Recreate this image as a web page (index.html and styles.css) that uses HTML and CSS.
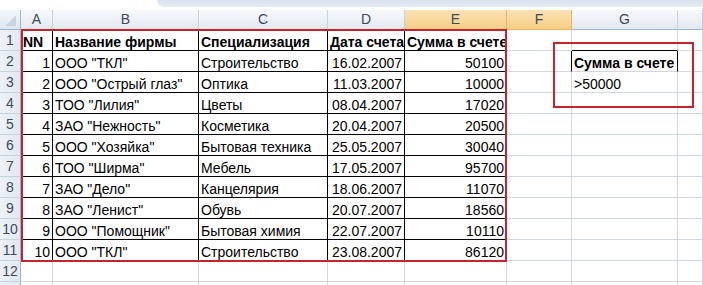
FILE: index.html
```html
<!DOCTYPE html>
<html lang="ru">
<head>
<meta charset="utf-8">
<link rel="stylesheet" href="styles.css">
</head>
<body>
<div class="sheet">
  <div class="topbar"><div class="fbar"></div></div>
  <div class="grid">
    <div class="corner"></div>
    <div class="ch">A</div><div class="ch">B</div><div class="ch">C</div><div class="ch">D</div>
    <div class="ch sel">E</div><div class="ch sel">F</div><div class="ch">G</div><div class="ch"></div>

    <div class="rh">1</div>
    <div class="c t b">NN</div><div class="c t b">Название фирмы</div><div class="c t b">Специализация</div><div class="c t b">Дата счета</div><div class="c t b">Сумма в счете</div>
    <div class="c fr"></div><div class="c gt"></div><div class="c"></div>

    <div class="rh">2</div>
    <div class="c t r">1</div><div class="c t">ООО "ТКЛ"</div><div class="c t">Строительство</div><div class="c t r">16.02.2007</div><div class="c t r">50100</div>
    <div class="c fk"></div><div class="c b gk">Сумма в счете</div><div class="c"></div>

    <div class="rh">3</div>
    <div class="c t r">2</div><div class="c t">ООО "Острый глаз"</div><div class="c t">Оптика</div><div class="c t r">11.03.2007</div><div class="c t r">10000</div>
    <div class="c"></div><div class="c">&gt;50000</div><div class="c"></div>

    <div class="rh">4</div>
    <div class="c t r">3</div><div class="c t">ТОО "Лилия"</div><div class="c t">Цветы</div><div class="c t r">08.04.2007</div><div class="c t r">17020</div>
    <div class="c"></div><div class="c"></div><div class="c"></div>

    <div class="rh">5</div>
    <div class="c t r">4</div><div class="c t">ЗАО "Нежность"</div><div class="c t">Косметика</div><div class="c t r">20.04.2007</div><div class="c t r">20500</div>
    <div class="c"></div><div class="c"></div><div class="c"></div>

    <div class="rh">6</div>
    <div class="c t r">5</div><div class="c t">ООО "Хозяйка"</div><div class="c t">Бытовая техника</div><div class="c t r">25.05.2007</div><div class="c t r">30040</div>
    <div class="c"></div><div class="c"></div><div class="c"></div>

    <div class="rh">7</div>
    <div class="c t r">6</div><div class="c t">ТОО "Ширма"</div><div class="c t">Мебель</div><div class="c t r">17.05.2007</div><div class="c t r">95700</div>
    <div class="c"></div><div class="c"></div><div class="c"></div>

    <div class="rh">8</div>
    <div class="c t r">7</div><div class="c t">ЗАО "Дело"</div><div class="c t">Канцелярия</div><div class="c t r">18.06.2007</div><div class="c t r">11070</div>
    <div class="c"></div><div class="c"></div><div class="c"></div>

    <div class="rh">9</div>
    <div class="c t r">8</div><div class="c t">ЗАО "Ленист"</div><div class="c t">Обувь</div><div class="c t r">20.07.2007</div><div class="c t r">18560</div>
    <div class="c"></div><div class="c"></div><div class="c"></div>

    <div class="rh">10</div>
    <div class="c t r">9</div><div class="c t">ООО "Помощник"</div><div class="c t">Бытовая химия</div><div class="c t r">22.07.2007</div><div class="c t r">10110</div>
    <div class="c"></div><div class="c"></div><div class="c"></div>

    <div class="rh">11</div>
    <div class="c t r">10</div><div class="c t">ООО "ТКЛ"</div><div class="c t">Строительство</div><div class="c t r">23.08.2007</div><div class="c t r">86120</div>
    <div class="c"></div><div class="c"></div><div class="c"></div>

    <div class="rh">12</div>
    <div class="c"></div><div class="c"></div><div class="c"></div><div class="c"></div><div class="c"></div>
    <div class="c"></div><div class="c"></div><div class="c"></div>

    <div class="rh"></div>
    <div class="c"></div><div class="c"></div><div class="c"></div><div class="c"></div><div class="c"></div>
    <div class="c"></div><div class="c"></div><div class="c"></div>
  </div>
  <div class="redbox main"></div>
  <div class="redbox crit"></div>
</div>
</body>
</html>
```

FILE: styles.css
```css
html, body {
  margin: 0;
  padding: 0;
  background: #ffffff;
  overflow: hidden;
}
.sheet {
  position: relative;
  width: 703px;
  height: 285px;
  overflow: hidden;
  font-family: "Liberation Sans", Arial, sans-serif;
  font-size: 14px;
  color: #000;
}
.topbar {
  height: 10px;
  background: #ffffff;
  display: flex;
  justify-content: flex-end;
}
.fbar {
  width: 546px;
  height: 7px;
  background: linear-gradient(#d9e2ee, #e6ecf4);
  border-bottom-left-radius: 7px;
}
.grid {
  display: grid;
  grid-template-columns: 21px 32px 146px 129px 77px 102px 65px 106px 25px;
  grid-template-rows: 20px repeat(13, 21px);
}
.corner {
  box-sizing: border-box;
  border-right: 1px solid #9eb6ce;
  border-bottom: 1px solid #9eb6ce;
  background:
    linear-gradient(135deg, transparent 0 58%, #c9d3df 58% 100%) no-repeat 4px 4px / 12px 12px,
    linear-gradient(#f4f7fb, #dde5ef);
}
.ch {
  box-sizing: border-box;
  border-right: 1px solid #c5d2df;
  border-bottom: 1px solid #9eb6ce;
  background: linear-gradient(#f7f9fc, #e3e9f1);
  color: #3c4a5c;
  font-size: 14px;
  line-height: 19px;
  text-align: center;
}
.ch.sel {
  background: linear-gradient(#fbe3b4, #f6ce86);
  border-right-color: #e3b66a;
  border-bottom-color: #f1b55a;
}
.rh {
  box-sizing: border-box;
  border-right: 1px solid #9eb6ce;
  border-bottom: 1px solid #c5d2df;
  background: linear-gradient(90deg, #eef2f8, #e2e8f1);
  color: #3c4a5c;
  font-size: 14px;
  line-height: 20px;
  text-align: center;
}
.c {
  box-sizing: border-box;
  border-right: 1px solid #d0d7e5;
  border-bottom: 1px solid #d0d7e5;
  padding: 4px 2px 0 2px;
  line-height: 16px;
  white-space: nowrap;
  overflow: hidden;
}
.c.t {
  border-right-color: #000;
  border-bottom-color: #000;
}
.c.r {
  text-align: right;
}
.c.b {
  font-weight: bold;
}
.c.gt {
  border-bottom-color: #000;
}
.c.fk {
  border-right-color: #000;
}
.c.gk {
  border-right-color: #000;
}
.redbox {
  position: absolute;
  box-sizing: border-box;
  border: 2px solid #c8232c;
}
.redbox.main {
  left: 21px;
  top: 29px;
  width: 486px;
  height: 233px;
}
.redbox.crit {
  left: 553px;
  top: 42px;
  width: 141px;
  height: 66px;
}
```
